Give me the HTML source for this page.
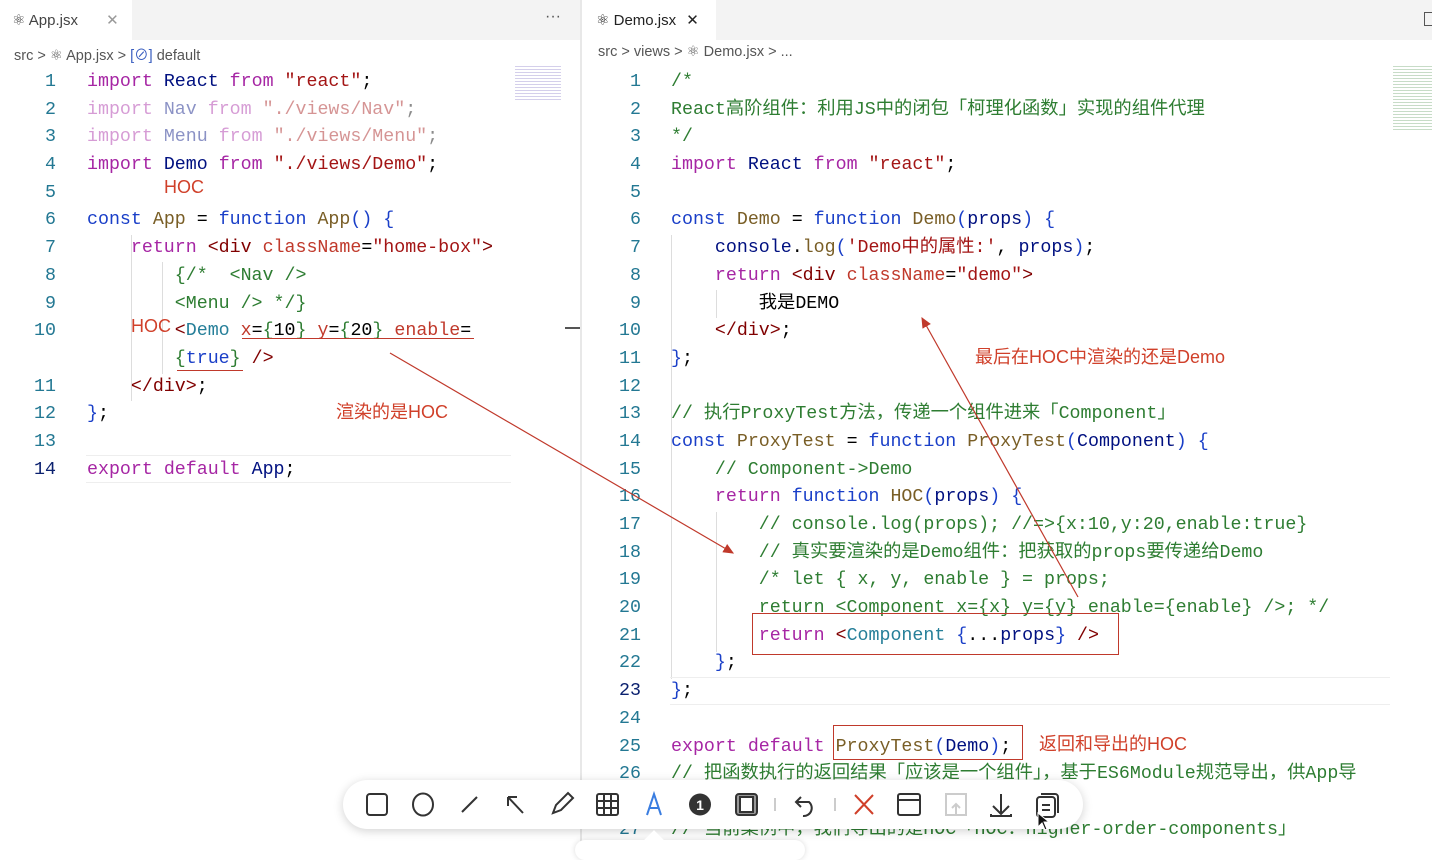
<!DOCTYPE html>
<html><head><meta charset="utf-8">
<style>
*{margin:0;padding:0;box-sizing:border-box}
body{width:1432px;height:848px;overflow:hidden;background:#fff;position:relative;font-family:"Liberation Sans","Noto Sans CJK SC",sans-serif}
.mono{font-family:"Liberation Mono","Noto Sans CJK SC",monospace;font-size:18.3px;white-space:pre;position:absolute;line-height:27.68px}
.ln{position:absolute;font-family:"Liberation Mono",monospace;font-size:18.3px;color:#237893;text-align:right;width:40px;line-height:27.68px}
.k{color:#a626a4}.b{color:#1a3fc8}.f{color:#795e26}.v{color:#001080}.s{color:#a31515}.c{color:#2e7d32}.t{color:#800000}.a{color:#c0392b}.ty{color:#267f99}
.ann{position:absolute;color:#d0402a;font-size:18px;white-space:nowrap}
.tabbar{position:absolute;top:0;height:40px;background:#f3f3f3}
.bc{position:absolute;top:44px;font-size:14.5px;color:#555;white-space:nowrap}
</style></head><body>
<div class="tabbar" style="left:0;width:580px"></div>
<div class="tabbar" style="left:582px;width:850px"></div>
<div style="position:absolute;left:0;top:0;width:132px;height:40px;background:#fff"></div>
<div style="position:absolute;left:12px;top:11px;font-size:15px;color:#444">⚛ App.jsx <span style="margin-left:24px;color:#999">✕</span></div>
<div style="position:absolute;left:545px;top:8px;font-size:16px;color:#555">···</div>
<div style="position:absolute;left:582px;top:0;width:134px;height:40px;background:#fff"></div>
<div style="position:absolute;left:596px;top:11px;font-size:15px;color:#222">⚛ Demo.jsx <span style="margin-left:6px">✕</span></div>
<div style="position:absolute;left:1424px;top:12px;width:10px;height:14px;border:1px solid #555"></div>
<div class="bc" style="left:14px">src &gt; ⚛ App.jsx &gt; <span style="color:#3b5fc0">[⊘]</span> default</div>
<div class="bc" style="left:598px">src &gt; views &gt; ⚛ Demo.jsx &gt; ...</div>
<div style="position:absolute;left:580px;top:0;width:2px;height:848px;background:#e8e8e8"></div>
<div style="position:absolute;left:565px;top:327px;width:15px;height:2px;background:#555"></div>
<div style="position:absolute;left:515px;top:66px;width:46px;height:34px;background:repeating-linear-gradient(#c9c3e6 0 1px,#fff 1px 3px);opacity:.8"></div>
<div style="position:absolute;left:1393px;top:66px;width:39px;height:64px;background:repeating-linear-gradient(#b9d3b9 0 1px,#fff 1px 3px);opacity:.8"></div>

<!-- left code -->
<div style="position:absolute;left:131px;top:235px;width:1px;height:166px;background:#ddd"></div>
<div style="position:absolute;left:162px;top:262px;width:1px;height:112px;background:#ddd"></div>
<div style="position:absolute;left:86px;top:455px;width:425px;height:28px;border-top:1px solid #eee;border-bottom:1px solid #eee"></div>
<div class="ln" style="left:16px;top:69px">1<br>2<br>3<br>4<br>5<br>6<br>7<br>8<br>9<br>10<br><br>11<br>12<br>13<br><span style="color:#0b216f">14</span></div>
<div class="mono" style="left:87px;top:69px"><span class="k">import</span> <span class="v">React</span> <span class="k">from</span> <span class="s">"react"</span>;
<span style="opacity:.45"><span class="k">import</span> <span class="v">Nav</span> <span class="k">from</span> <span class="s">"./views/Nav"</span>;</span>
<span style="opacity:.45"><span class="k">import</span> <span class="v">Menu</span> <span class="k">from</span> <span class="s">"./views/Menu"</span>;</span>
<span class="k">import</span> <span class="v">Demo</span> <span class="k">from</span> <span class="s">"./views/Demo"</span>;

<span class="b">const</span> <span class="f">App</span> = <span class="b">function</span> <span class="f">App</span><span class="b">()</span> <span class="b">{</span>
    <span class="k">return</span> <span class="t">&lt;div</span> <span class="a">className</span>=<span class="s">"home-box"</span><span class="t">&gt;</span>
        <span class="c">{/*  &lt;Nav /&gt;</span>
        <span class="c">&lt;Menu /&gt; */}</span>
        <span class="t">&lt;</span><span class="ty">Demo</span> <span class="a">x</span>=<span class="c">{</span>10<span class="c">}</span> <span class="a">y</span>=<span class="c">{</span>20<span class="c">}</span> <span class="a">enable</span>=
        <span class="c">{</span><span class="b">true</span><span class="c">}</span> <span class="t">/&gt;</span>
    <span class="t">&lt;/div&gt;</span>;
<span class="b">}</span>;

<span class="k">export</span> <span class="k">default</span> <span class="v">App</span>;</div>
<div class="ann" style="left:164px;top:177px">HOC</div>
<div class="ann" style="left:131px;top:316px">HOC</div>
<div style="position:absolute;left:242px;top:338px;width:232px;height:1px;background:#c0392b"></div>
<div style="position:absolute;left:177px;top:370px;width:66px;height:1px;background:#c0392b"></div>
<div class="ann" style="left:336px;top:398px">渲染的是HOC</div>

<!-- right code -->
<div style="position:absolute;left:671px;top:235px;width:1px;height:444px;background:#ddd"></div>
<div style="position:absolute;left:716px;top:290px;width:1px;height:28px;background:#ddd"></div>
<div style="position:absolute;left:716px;top:512px;width:1px;height:140px;background:#ddd"></div>
<div style="position:absolute;left:670px;top:677px;width:720px;height:28px;border-top:1px solid #eee;border-bottom:1px solid #eee"></div>
<div class="ln" style="left:601px;top:69px">1<br>2<br>3<br>4<br>5<br>6<br>7<br>8<br>9<br>10<br>11<br>12<br>13<br>14<br>15<br>16<br>17<br>18<br>19<br>20<br>21<br>22<br><span style="color:#0b216f">23</span><br>24<br>25<br>26<br><br>27</div>
<div class="mono" style="left:671px;top:69px"><span class="c">/*</span>
<span class="c">React高阶组件：利用JS中的闭包「柯理化函数」实现的组件代理</span>
<span class="c">*/</span>
<span class="k">import</span> <span class="v">React</span> <span class="k">from</span> <span class="s">"react"</span>;

<span class="b">const</span> <span class="f">Demo</span> = <span class="b">function</span> <span class="f">Demo</span><span class="b">(</span><span class="v">props</span><span class="b">)</span> <span class="b">{</span>
    <span class="v">console</span>.<span class="f">log</span><span class="b">(</span><span class="s">'Demo中的属性:'</span>, <span class="v">props</span><span class="b">)</span>;
    <span class="k">return</span> <span class="t">&lt;div</span> <span class="a">className</span>=<span class="s">"demo"</span><span class="t">&gt;</span>
        我是DEMO
    <span class="t">&lt;/div&gt;</span>;
<span class="b">}</span>;

<span class="c">// 执行ProxyTest方法，传递一个组件进来「Component」</span>
<span class="b">const</span> <span class="f">ProxyTest</span> = <span class="b">function</span> <span class="f">ProxyTest</span><span class="b">(</span><span class="v">Component</span><span class="b">)</span> <span class="b">{</span>
    <span class="c">// Component-&gt;Demo</span>
    <span class="k">return</span> <span class="b">function</span> <span class="f">HOC</span><span class="b">(</span><span class="v">props</span><span class="b">)</span> <span class="b">{</span>
        <span class="c">// console.log(props); //=&gt;{x:10,y:20,enable:true}</span>
        <span class="c">// 真实要渲染的是Demo组件：把获取的props要传递给Demo</span>
        <span class="c">/* let { x, y, enable } = props;</span>
        <span class="c">return &lt;Component x={x} y={y} enable={enable} /&gt;; */</span>
        <span class="k">return</span> <span class="t">&lt;</span><span class="ty">Component</span> <span class="b">{</span>...<span class="v">props</span><span class="b">}</span> <span class="t">/&gt;</span>
    <span class="b">}</span>;
<span class="b">}</span>;

<span class="k">export</span> <span class="k">default</span> <span class="f">ProxyTest</span><span class="b">(</span><span class="v">Demo</span><span class="b">)</span>;
<span class="c">// 把函数执行的返回结果「应该是一个组件」，基于ES6Module规范导出，供App导</span>
<span class="c">   入使用</span>
<span class="c">// 当前案例中，我们导出的是HOC「HOC：higher-order-components」</span></div>
<div style="position:absolute;left:752px;top:613px;width:367px;height:42px;border:1.5px solid #c0392b"></div>
<div style="position:absolute;left:833px;top:725px;width:190px;height:35px;border:1.5px solid #c0392b"></div>
<div class="ann" style="left:975px;top:343px">最后在HOC中渲染的还是Demo</div>
<div class="ann" style="left:1039px;top:730px">返回和导出的HOC</div>

<svg style="position:absolute;left:0;top:0" width="1432" height="848">
<defs><marker id="ar" markerWidth="10" markerHeight="10" refX="8" refY="5" orient="auto"><path d="M0,1 L9,5 L0,9z" fill="#c0392b"/></marker></defs>
<line x1="390" y1="353" x2="733" y2="553" stroke="#c0392b" stroke-width="1.2" marker-end="url(#ar)"/>
<line x1="1078" y1="597" x2="922" y2="318" stroke="#c0392b" stroke-width="1.2" marker-end="url(#ar)"/>
</svg>

<div style="position:absolute;left:343px;top:780px;width:740px;height:49px;background:#fff;border-radius:25px;box-shadow:0 2px 10px rgba(0,0,0,.18)"></div>
<div style="position:absolute;left:575px;top:840px;width:230px;height:20px;background:#fff;border-radius:10px;box-shadow:0 0 6px rgba(0,0,0,.15)"></div>
<div style="position:absolute;left:647px;top:833px;width:14px;height:14px;background:#fff;transform:rotate(45deg)"></div>
<svg style="position:absolute;left:343px;top:780px" width="740" height="49" fill="none" stroke="#333" stroke-width="2">
<rect x="24" y="14" width="20" height="21" rx="3"/>
<ellipse cx="80" cy="24.5" rx="10" ry="11"/>
<line x1="119" y1="32" x2="134" y2="17"/>
<path d="M165 17 L180 33 M165 17 L165 26 M165 17 L174 17"/>
<path d="M210 33 L213 25 L225 13 L230 18 L218 30 Z"/>
<rect x="254" y="14" width="21" height="21" rx="2"/><path d="M261 14v21M268 14v21M254 21h21M254 28h21"/>
<path d="M304 35 L311 14 L318 35 M306 28 h10" stroke="#3a7de0"/>
<circle cx="357" cy="24.5" r="11" fill="#333" stroke="none"/><text x="357" y="30" font-size="14" fill="#fff" stroke="none" text-anchor="middle" font-family="Liberation Sans" font-weight="bold">1</text>
<rect x="393" y="14" width="21" height="21" rx="3" fill="#999"/><rect x="397" y="17" width="13" height="15" fill="#fff" stroke="#333"/>
<line x1="432" y1="18" x2="432" y2="31" stroke="#ccc"/>
<path d="M458 17 L453 22 L458 27 M453 22 H466 a8 8 0 0 1 -6 14"/>
<line x1="492" y1="18" x2="492" y2="31" stroke="#ccc"/>
<path d="M512 15 L530 34 M530 15 L512 34" stroke="#d0402a"/>
<rect x="555" y="14" width="22" height="21" rx="2"/><path d="M555 20h22"/>
<rect x="603" y="14" width="20" height="21" stroke="#ccc"/><path d="M613 34V25 M609 28l4-4 4 4" stroke="#ccc"/>
<path d="M650 26l8 8 8-8 M658 14v20 M648 34v2h20v-2"/>
<rect x="694" y="17" width="18" height="20" rx="3"/><path d="M698 14h14a3 3 0 0 1 3 3v16 M699 25h8 M699 30h8"/>
</svg>
<svg style="position:absolute;left:1037px;top:812px" width="14" height="20"><path d="M1 1 L1 15 L5 11 L8 18 L10 17 L7 10 L12 10 Z" fill="#111" stroke="#fff"/></svg>
</body></html>
